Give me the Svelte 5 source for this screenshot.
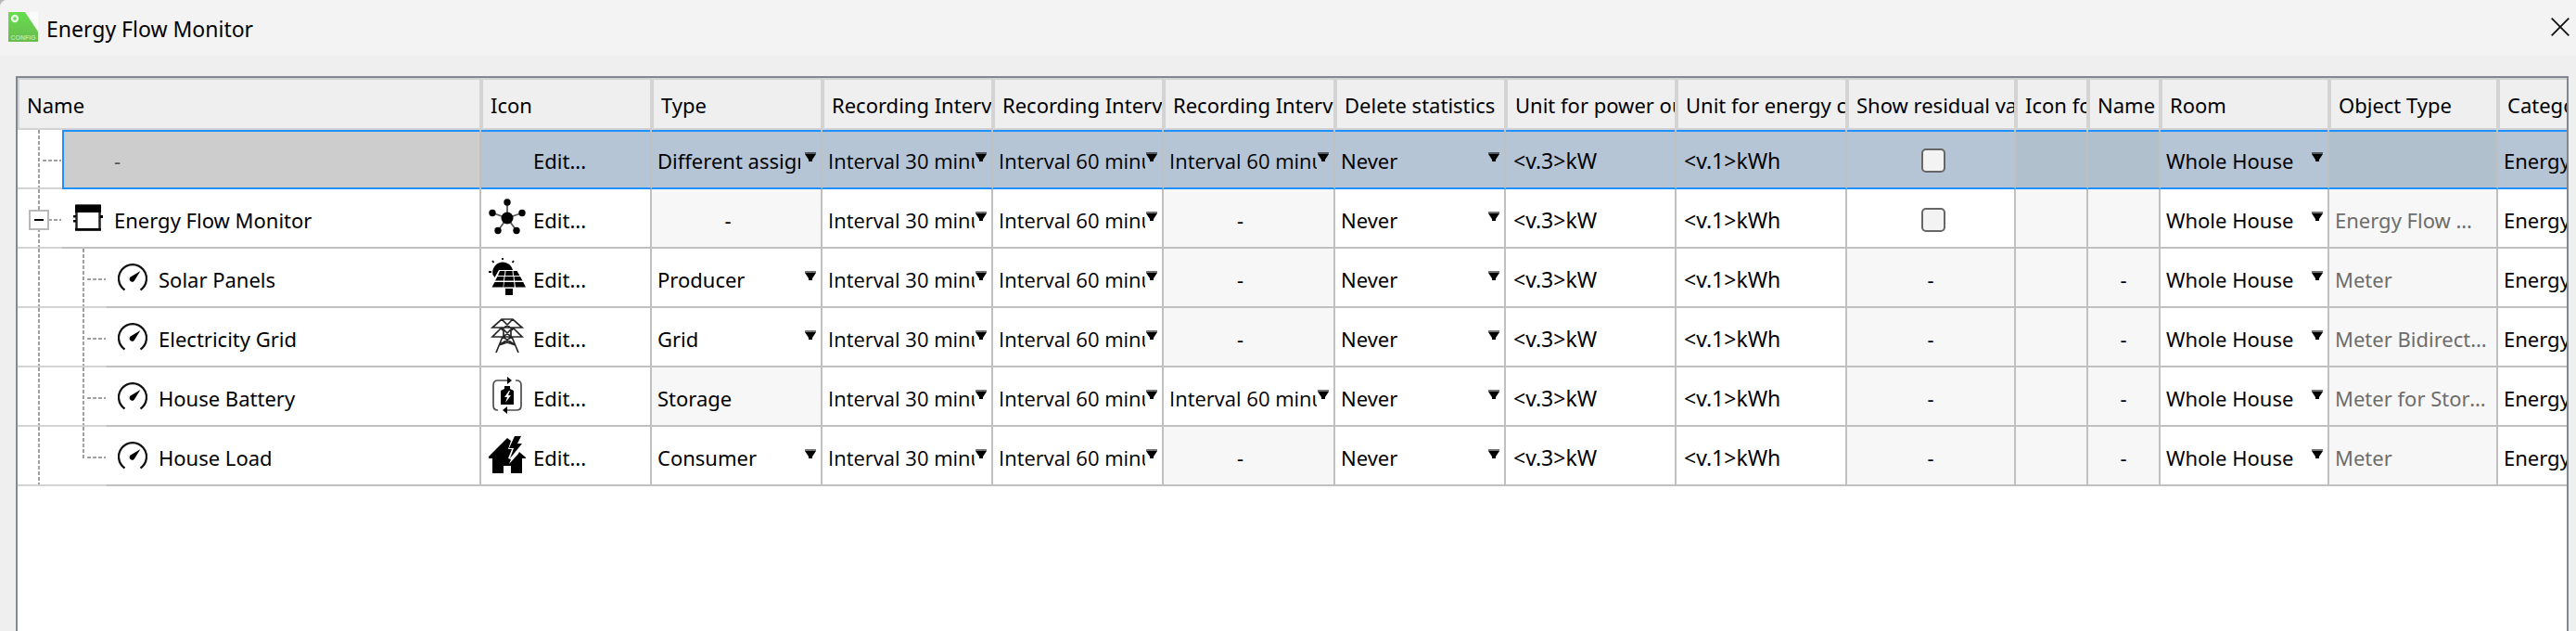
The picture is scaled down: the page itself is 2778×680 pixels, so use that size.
<script>
  const columns = [
    { label: 'Name', width: 500 },
    { label: 'Icon', width: 184 },
    { label: 'Type', width: 184 },
    { label: 'Recording Interval 1', width: 184 },
    { label: 'Recording Interval 2', width: 184 },
    { label: 'Recording Interval 3', width: 185 },
    { label: 'Delete statistics', width: 184 },
    { label: 'Unit for power output', width: 184 },
    { label: 'Unit for energy counter', width: 184 },
    { label: 'Show residual value', width: 182 },
    { label: 'Icon for residual', width: 78 },
    { label: 'Name for residual', width: 78 },
    { label: 'Room', width: 182 },
    { label: 'Object Type', width: 182 },
    { label: 'Category', width: 182 }
  ];
  const total = columns.reduce((sum, c) => sum + c.width, 0);

  const rows = [
    { name: '-', depth: 1, selected: true, type: 'Different assignments', pick: true, third: true, residual: true, object: '' },
    { name: 'Energy Flow Monitor', depth: 1, kind: 'monitor', icon: 'flow', type: '-', residual: true, object: 'Energy Flow Monitor' },
    { name: 'Solar Panels', depth: 2, kind: 'meter', icon: 'solar', type: 'Producer', pick: true, object: 'Meter' },
    { name: 'Electricity Grid', depth: 2, kind: 'meter', icon: 'pylon', type: 'Grid', pick: true, object: 'Meter Bidirectional' },
    { name: 'House Battery', depth: 2, kind: 'meter', icon: 'battery', type: 'Storage', third: true, object: 'Meter for Storage' },
    { name: 'House Load', depth: 2, last: true, kind: 'meter', icon: 'house', type: 'Consumer', pick: true, object: 'Meter' }
  ];
</script>

{#snippet pick(value, label, interval = false)}
  <td>
    <div class="pick">
      <select class:interval aria-label={label}><option>{value}</option></select>
      <svg class="arrow" width="14" height="10" viewBox="0 0 14 10" aria-hidden="true">
        <path d="M1 0h12v2H1z" fill="#000" opacity=".55" />
        <path d="M1 2h12L9 8v2H5V8z" fill="#000" />
      </svg>
    </div>
  </td>
{/snippet}

<div class="window">
  <header class="titlebar">
    <svg class="logo" width="32" height="32" viewBox="0 0 32 32" aria-hidden="true">
      <defs>
        <linearGradient id="leaf" x1="0" y1="0" x2="0" y2="1">
          <stop offset="0" stop-color="#66dd4e" /><stop offset="1" stop-color="#68bb4e" />
        </linearGradient>
      </defs>
      <path d="M18 0h14v22z" fill="#fbfbfb" />
      <path d="M0 0h18l14 21v11H0z" fill="url(#leaf)" />
      <circle cx="7" cy="7" r="3" fill="none" stroke="#e4fbe0" stroke-width="2.4" />
      <text x="16" y="30" text-anchor="middle" font-size="7" font-weight="700" fill="#b5e8a6">CONFIG</text>
    </svg>
    <h1>Energy Flow Monitor</h1>
    <button class="close" aria-label="Close">
      <svg width="20" height="20" viewBox="0 0 20 20"><path d="M.7.7l18.6 18.6M19.3.7L.7 19.3" stroke="#111" stroke-width="1.8" /></svg>
    </button>
  </header>

  <main>
    <table style:width="{total}px">
      <colgroup>
        {#each columns as c}<col style:width="{c.width}px" />{/each}
      </colgroup>
      <thead>
        <tr>{#each columns as c}<th scope="col">{c.label}</th>{/each}</tr>
      </thead>
      <tbody>
        {#each rows as r}
          <tr class:selected={r.selected}>
            <td class="tree">
              <div class="branch">
                <span class="gutter run" class:arm={r.depth === 1}>
                  {#if r.kind === 'monitor'}<button class="expander" aria-label="Collapse"></button>{/if}
                </span>
                {#if r.depth === 2}<span class="gutter arm" class:run={!r.last} class:half={r.last}></span>{/if}
                <span class="node">
                  <span class="kind">
                    {#if r.kind === 'monitor'}
                      <svg width="32" height="30" viewBox="0 0 32 30" aria-hidden="true">
                        <path d="M3.5 1.5h25v26h-25z" fill="#fff" stroke="#222" stroke-width="2.5" />
                        <path d="M2 1h28v8H2zM2 26h28v2.500H2z" />
                        <path d="M0 12h3v2.500H0zM0 17h3v2.500H0zM29 12h3v3h-3z" />
                      </svg>
                    {:else if r.kind === 'meter'}
                      <svg width="32" height="32" viewBox="0 0 32 32" aria-hidden="true">
                        <path d="M7.500 28.500A15 15 0 1 1 24.500 28.500" fill="none" stroke="#111" stroke-width="2.300" />
                        <path d="M24.500 8L18.500 17.500a3 3 0 1 1-4-3.500z" />
                      </svg>
                    {/if}
                  </span>
                  {r.name}
                </span>
              </div>
            </td>
            <td>
              <div class="edit">
                <span class="glyph">
                  {#if r.icon}
                    <svg width="40" height="40" viewBox="0 0 40 40" aria-hidden="true">
                      {#if r.icon === 'flow'}
                        <circle cx="20" cy="21" r="6.500" />
                        <circle cx="20" cy="4" r="3.700" /><circle cx="4" cy="15.500" r="3.700" /><circle cx="36" cy="15.500" r="3.700" />
                        <circle cx="10" cy="34.500" r="3.700" /><circle cx="30" cy="34.500" r="3.700" />
                        <path d="M20 21V4M20 21L4 15.500M20 21l16-5.500M20 21L10 34.500M20 21l10 13.500" stroke="#000" stroke-width="1.800" opacity=".65" />
                      {:else if r.icon === 'solar'}
                        <path d="M4.500 18a11 11 0 0 1 21.500-5H11L6.500 21z" />
                        <path d="M15 0v2M4 3l1.500 2M27 3l-1.500 2M0 15h3" stroke="#000" stroke-width="1.800" />
                        <path d="M12 14h5.500l-.5 5h-7zM18.500 14h7l.5 5h-8zM26.500 14h4l3 5h-6.500zM9.500 20h7l-.5 4.500H7zM17.500 20h9l.5 4.500H17zM27.500 20H34l2.500 4.500H28zM6.500 26H16l-.5 5.500H3.500zM16.800 26h10.400l.6 5.500H16.200zM28.200 26h9l2.800 5.500H29zM18 33h8v7h-8z" />
                      {:else if r.icon === 'pylon'}
                        <path d="M14 2h12L36 11H4zM14 2l12 12M26 2L14 14M14 11l-10 10h32L26 11M16 11v10M24 11v10M14 11l10 10M26 11L16 21M15 21L8 38M25 21l7 17M15 21l14 9M25 21l-14 9M11 30l9-3 9 3" fill="none" stroke="#000" stroke-width="1.700" opacity=".85" />
                      {:else if r.icon === 'battery'}
                        <path d="M18 4h-8q-5 0-5 5v22q0 5 5 5M22 36h8q5 0 5-5V9q0-5-5-5h-1M10 4h13M17 36h13" fill="none" stroke="#000" stroke-width="1.700" opacity=".7" />
                        <path d="M20 0l5 4-5 4zM20 32l-5 4 5 4z" />
                        <path d="M17 10h6v3l4 2v15H13V15l4-2z" />
                        <path d="M22 15l-5 7h3l-2 6 6-8h-3l2-5z" fill="#fff" />
                      {:else}
                        <path d="M20 2l4 3-3 9h4l-4 10 3 1-2 5 10-11 1-2 7 6v1h-4v16H24V32h-8v8H4V24H0v-2z" />
                        <path d="M28 0h7l-4 8h5L23 24l4-11h-5z" />
                      {/if}
                    </svg>
                  {/if}
                </span>
                <button>Edit...</button>
              </div>
            </td>
            {#if r.pick}
              {@render pick(r.type, 'Type')}
            {:else}
              <td class="off" class:dash={r.type === '-'} class:narrow={r.type === '-'}>{r.type}</td>
            {/if}
            {@render pick('Interval 30 minutes', 'Recording Interval 1', true)}
            {@render pick('Interval 60 minutes', 'Recording Interval 2', true)}
            {#if r.third}
              {@render pick('Interval 60 minutes', 'Recording Interval 3', true)}
            {:else}
              <td class="off dash narrow">-</td>
            {/if}
            {@render pick('Never', 'Delete statistics')}
            <td><input class="unit" type="text" value="<v.3>kW" aria-label="Unit for power" /></td>
            <td><input class="unit" type="text" value="<v.1>kWh" aria-label="Unit for energy" /></td>
            {#if r.residual}
              <td class="check"><input type="checkbox" aria-label="Show residual value" /></td>
              <td class="off"></td>
              <td class="off"></td>
            {:else}
              <td class="off dash">-</td>
              <td class="off"></td>
              <td class="off dash">-</td>
            {/if}
            {@render pick('Whole House', 'Room')}
            <td class="off muted">{r.object}</td>
            <td>Energy</td>
          </tr>
        {/each}
      </tbody>
    </table>
  </main>
</div>

<style>
  :global(body) { background: #b8b8b8; }
  * { box-sizing: border-box; }

  .window {
    display: flex;
    flex-direction: column;
    min-height: 100vh;
    background: #efefef;
    border-top-left-radius: 8px;
    overflow: hidden;
    color: #000;
    font: 22px/30px 'Noto Sans', 'Open Sans', sans-serif;
  }
  button, input, select { font: inherit; color: inherit; margin: 0; border: 0; background: none; padding: 0; }

  .titlebar {
    display: flex;
    align-items: center;
    gap: 9px;
    height: 60px;
    padding: 0 7px 2px 9px;
    background: #f3f3f3;
  }
  .logo text { font-family: 'Liberation Sans', sans-serif; }
  h1 { flex: 1; margin: 0; font-size: 23px; font-weight: 400; line-height: 32px; padding-top: 4px; }
  .close { height: 20px; line-height: 0; }

  main {
    flex: 1;
    margin: 22px 8px 0 17px;
    border: 2px solid #828790;
    border-bottom: 0;
    background: #fff;
    overflow: hidden;
  }
  table { table-layout: fixed; border-spacing: 0; }
  th {
    height: 56px;
    padding: 2px 0 0 8px;
    border: 2px solid #d3d3d3;
    background: #efefef;
    font-weight: 400;
    text-align: left;
    white-space: nowrap;
    overflow: hidden;
  }
  td {
    height: 64px;
    padding: 4px 4px 0 6px;
    border-right: 2px solid #c0c0c0;
    border-bottom: 2px solid #c0c0c0;
    white-space: nowrap;
    overflow: hidden;
  }
  .off { background: #f7f7f7; }
  .dash { text-align: center; padding-left: 4px; }
  .narrow { padding-right: 22px; }
  .muted { color: #6d6d6d; text-overflow: ellipsis; padding-right: 8px; }

  .tree { padding: 0; border-bottom: 0; }
  .branch { display: flex; height: 64px; }
  .gutter {
    display: grid;
    width: 48px;
    align-content: center;
    border-bottom: 2px solid #d3d3d3;
    background-repeat: no-repeat;
    background-origin: border-box;
    background-clip: border-box;
    --down: repeating-linear-gradient(#a0a0a0 0 4px, #fff0 4px 6px);
    --across: repeating-linear-gradient(90deg, #a0a0a0 0 4px, #fff0 4px 6px);
  }
  .run { background-image: var(--down); background-size: 2px 64px; background-position: 22px 0; }
  .arm { background-image: var(--down), var(--across); background-size: 2px 64px, 20px 2px; background-position: 22px 0, 27px 32px; }
  .half { background-size: 2px 34px, 20px 2px; }
  .expander {
    width: 22px;
    height: 22px;
    margin: 4px 0 0 12px;
    border: 2px solid #b9b9b9;
    background: linear-gradient(#000, #000) center / 10px 2px no-repeat #fff;
  }
  .node {
    flex: 1;
    display: flex;
    align-items: center;
    padding: 4px 0 0 12px;
    border-bottom: 2px solid #c0c0c0;
  }
  .kind { display: flex; width: 44px; height: 34px; }
  .edit { display: flex; align-items: center; padding-left: 2px; gap: 8px; height: 58px; }
  .glyph { width: 40px; height: 40px; margin-bottom: 6px; }

  .pick { display: grid; align-items: center; }
  .pick > * { grid-area: 1 / 1; }
  select { appearance: none; width: 100%; height: 30px; padding-right: 18px; overflow: hidden; }
  .interval { font-family: 'Open Sans', 'Noto Sans', sans-serif; padding-right: 14px; }
  .arrow { justify-self: end; align-self: start; margin-top: 6px; }
  .unit { display: block; width: 100%; height: 30px; padding-left: 2px; font-size: 23px; }
  .check { text-align: center; line-height: 0; padding-left: 10px; }
  .check input {
    appearance: none;
    width: 26px;
    height: 26px;
    border: 2px solid #666;
    border-radius: 5px;
    background: #f3f3f3;
  }

  .selected td { background: #b6c5d5; border-bottom-color: #1e90ff; box-shadow: inset 0 2px #1e90ff; }
  .selected .off { background: #b1c0cd; }
  .selected .tree { background: #fff; box-shadow: none; }
  .selected .node {
    background: #cdcdcd;
    color: #555;
    border: 2px solid #1e90ff;
    border-right: 0;
    padding: 2px 0 0 10px;
  }
</style>
